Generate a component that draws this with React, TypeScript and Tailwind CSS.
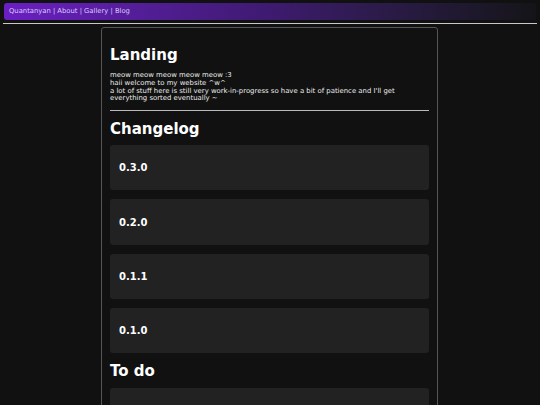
import React from 'react';

const versions = ['0.3.0', '0.2.0', '0.1.1', '0.1.0'];

export default function App() {
  return (
    <div className="min-h-[405px] bg-[#111111] text-white pt-[3px] font-['DejaVu_Sans',sans-serif] antialiased">
      {/* Nav bar */}
      <div className="mx-[4px] h-[17px] rounded-[3px] bg-gradient-to-r from-[#6a1fc2] via-[#3e1a70] to-[#151418] flex items-center px-[5px]">
        <span className="text-[6.8px] text-[#dccbff]">Quantanyan | About | Gallery | Blog</span>
      </div>
      <div className="mx-[3px] mt-[3px] h-[1px] bg-[#c8c8c8]" />

      {/* Content card */}
      <div className="ml-[101px] w-[337px] mt-[3px] border border-[#555555] rounded-[3px] px-[8px] pt-[18px]">
        <h1 className="text-[15px] font-bold leading-[18px]">Landing</h1>
        <div className="mt-[8px] text-[6.9px] leading-[7.8px] text-[#ececec]">
          <p>meow meow meow meow meow :3</p>
          <p>haii welcome to my website ^w^</p>
          <p>a lot of stuff here is still very work-in-progress so have a bit of patience and I'll get everything sorted eventually ~</p>
        </div>
        <div className="mt-[7px] h-[1px] bg-[#bbbbbb]" />
        <h2 className="mt-[9px] text-[15px] font-bold leading-[18px]">Changelog</h2>
        <div className="mt-[7px] flex flex-col gap-[9px]">
          {versions.map(v => (
            <div key={v} className="h-[45.3px] rounded-[3px] bg-[#222222] flex items-center px-[9px]">
              <span className="text-[10px] font-bold">{v}</span>
            </div>
          ))}
        </div>
        <h2 className="mt-[9px] text-[15px] font-bold leading-[18px]">To do</h2>
        <div className="mt-[8px] h-[46px] rounded-[3px] bg-[#222222]" />
      </div>
    </div>
  );
}
